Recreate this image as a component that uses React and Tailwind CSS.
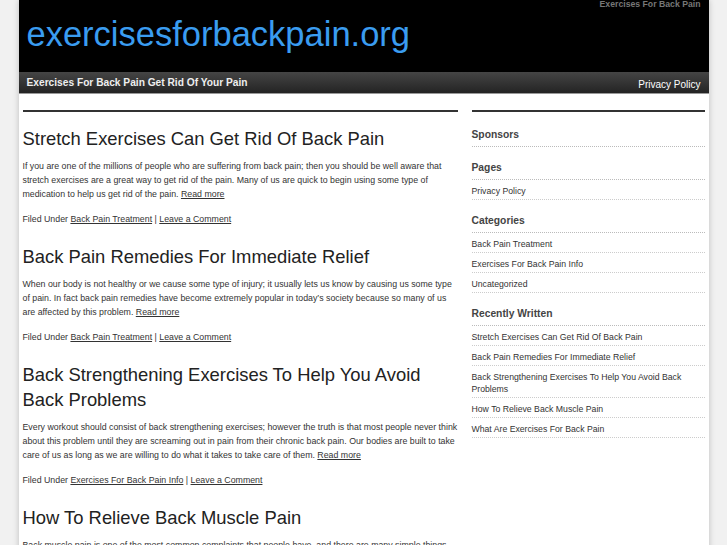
const posts = [
  {
    title: "Stretch Exercises Can Get Rid Of Back Pain",
    body: "If you are one of the millions of people who are suffering from back pain; then you should be well aware that stretch exercises are a great way to get rid of the pain. Many of us are quick to begin using some type of medication to help us get rid of the pain.",
    cat: "Back Pain Treatment",
  },
  {
    title: "Back Pain Remedies For Immediate Relief",
    body: "When our body is not healthy or we cause some type of injury; it usually lets us know by causing us some type of pain. In fact back pain remedies have become extremely popular in today\u2019s society because so many of us are affected by this problem.",
    cat: "Back Pain Treatment",
  },
  {
    title: "Back Strengthening Exercises To Help You Avoid Back Problems",
    body: "Every workout should consist of back strengthening exercises; however the truth is that most people never think about this problem until they are screaming out in pain from their chronic back pain. Our bodies are built to take care of us as long as we are willing to do what it takes to take care of them.",
    cat: "Exercises For Back Pain Info",
  },
  {
    title: "How To Relieve Back Muscle Pain",
    body: "Back muscle pain is one of the most common complaints that people have, and there are many simple things that you can do at home to help relieve the pain and get back to your normal daily activities.",
    cat: "Back Pain Treatment",
  },
];

const widgets = [
  { title: "Sponsors", items: [] },
  { title: "Pages", items: ["Privacy Policy"] },
  {
    title: "Categories",
    items: ["Back Pain Treatment", "Exercises For Back Pain Info", "Uncategorized"],
  },
  {
    title: "Recently Written",
    items: [
      "Stretch Exercises Can Get Rid Of Back Pain",
      "Back Pain Remedies For Immediate Relief",
      "Back Strengthening Exercises To Help You Avoid Back Problems",
      "How To Relieve Back Muscle Pain",
      "What Are Exercises For Back Pain",
    ],
  },
];

function Post({ post }) {
  return (
    <div className="pb-[18px]">
      <h2 className="text-[18.4px] leading-[25px] text-[#222] font-normal">{post.title}</h2>
      <p className="mt-[8px] text-[8.8px] leading-[14px] text-[#333]">
        {post.body} <a className="underline text-[#333]">Read more</a>
      </p>
      <p className="mt-[11px] text-[8.8px] leading-[14px] text-[#333]">
        Filed Under <a className="underline">{post.cat}</a> |{" "}
        <a className="underline">Leave a Comment</a>
      </p>
    </div>
  );
}

function Widget({ widget }) {
  return (
    <div className="mb-[14px]">
      <h3 className="text-[10.3px] leading-[14px] font-bold text-[#444] pb-[4px] border-b border-dotted border-[#bbb]">
        {widget.title}
      </h3>
      <ul>
        {widget.items.map((item) => (
          <li
            key={item}
            className="text-[8.7px] leading-[12px] text-[#333] pt-[5px] pb-[2px] border-b border-dotted border-[#ccc]"
          >
            {item}
          </li>
        ))}
      </ul>
    </div>
  );
}

export default function App() {
  return (
    <div className="min-h-screen bg-[#f1f1f1] font-['Liberation_Sans',Arial,sans-serif]">
      <div className="w-[690px] mx-auto bg-white shadow-[0_0_6px_rgba(0,0,0,0.22)] min-h-screen">
        <div className="bg-black h-[72px] px-2">
          <div className="h-[11px] text-right text-[8.7px] leading-[9px] font-bold text-[#777]">
            Exercises For Back Pain
          </div>
          <h1 className="mt-[6px] text-[34.5px] leading-[34px] text-[#3a9cf0] font-normal">
            exercisesforbackpain.org
          </h1>
        </div>
        <div className="h-[22px] bg-gradient-to-b from-[#454545] to-[#242424] border-b border-[#999] px-2 flex items-center justify-between">
          <span className="text-[10.2px] font-bold text-[#eee]">
            Exercises For Back Pain Get Rid Of Your Pain
          </span>
          <span className="text-[10px] text-white pt-[3px]">Privacy Policy</span>
        </div>
        <div className="flex gap-[14px] pl-[4px] pr-[4px] pt-[16px]">
          <div className="w-[435px] border-t-2 border-[#333] pt-[14px]">
            {posts.map((p) => (
              <Post key={p.title} post={p} />
            ))}
          </div>
          <div className="w-[233px] border-t-2 border-[#333] pt-[16px]">
            {widgets.map((w) => (
              <Widget key={w.title} widget={w} />
            ))}
          </div>
        </div>
      </div>
    </div>
  );
}
